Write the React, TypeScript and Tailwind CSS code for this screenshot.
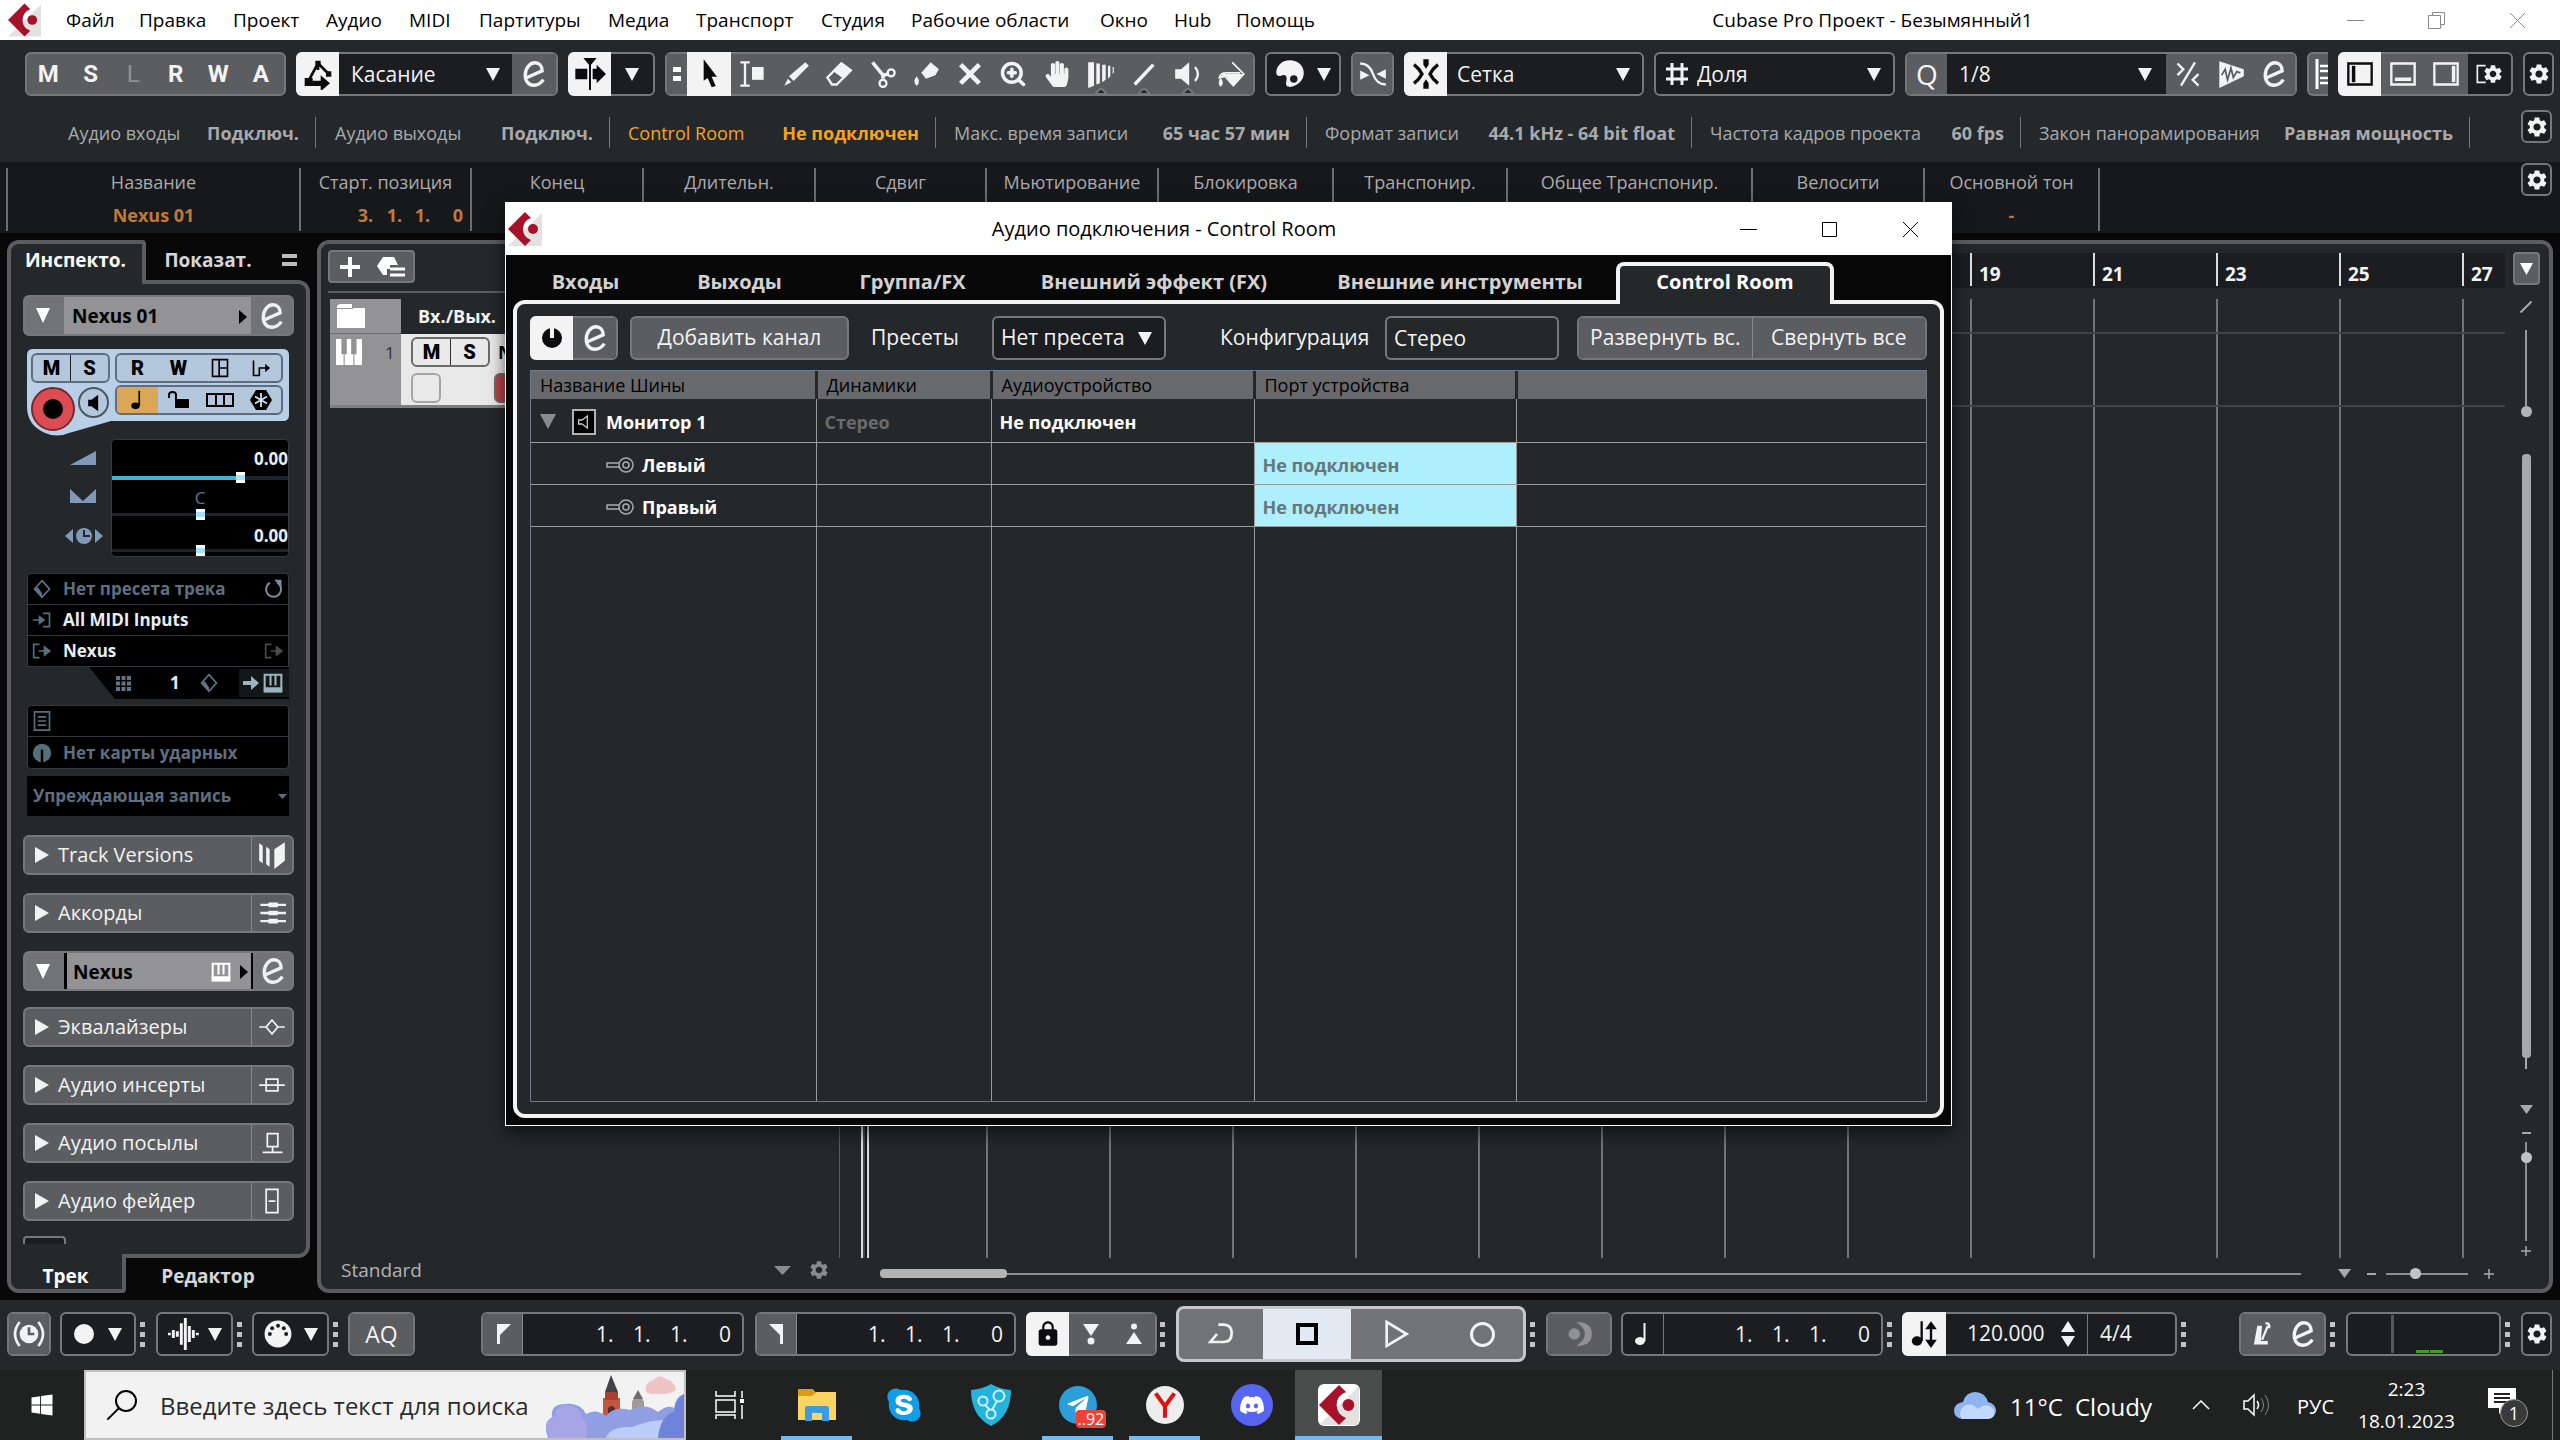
import type { ReactNode } from 'react';
import { MdLock, MdSettings } from 'react-icons/md';
import { FaDiscord, FaHandPaper, FaSkype, FaTelegramPlane, FaWindows } from 'react-icons/fa';
import { ZoomIn } from 'lucide-react';

const BTN = 'bg-[#5c5d61]';
const EDGE = 'border-2 border-[#77787b] rounded-md';
const FRAME = `${EDGE} overflow-hidden`;

function Svg({ box = '0 0 24 24', className = 'w-7 h-7', children }: { box?: string; className?: string; children: ReactNode }) {
  return (
    <svg viewBox={box} className={`shrink-0 ${className}`} fill="none" stroke="currentColor" strokeWidth="2">
      {children}
    </svg>
  );
}

const Down = ({ className = 'w-[14px] h-[13px]' }: { className?: string }) => (
  <svg viewBox="0 0 14 13" preserveAspectRatio="none" className={`shrink-0 ${className}`}><path d="M0 0H14L7 13Z" fill="currentColor" /></svg>
);

const Right = ({ className = 'w-[14px] h-4' }: { className?: string }) => (
  <svg viewBox="0 0 14 16" preserveAspectRatio="none" className={`shrink-0 ${className}`}><path d="M0 0L14 8L0 16Z" fill="currentColor" /></svg>
);

const EditIcon = ({ className = 'w-[30px] h-[30px]' }: { className?: string }) => (
  <Svg className={className}>
    <path d="M6 15L18.5 9.5C18.5 5.5 16 3 12.8 3C8.5 3 5 7.5 5 13C5 18 8 21 11.8 21C15.2 21 17.8 19 19.5 16.5" strokeWidth="2.7" />
  </Svg>
);

const Logo = ({ className = 'w-[33px] h-[34px]' }: { className?: string }) => (
  <Svg box="0 0 34 34" className={className}>
    <path d="M34 1V34H0Z" fill="#e2e2e2" stroke="none" />
    <path d="M17 0L23 6Q15 9 15 17Q15 25 23 28L17 34L0 17Z" fill="#a51229" stroke="none" />
    <circle cx="25" cy="17" r="5" fill="#a51229" stroke="none" />
  </Svg>
);

const Piano = ({ className = 'w-7 h-7' }: { className?: string }) => (
  <Svg className={className}>
    <path d="M0 0H5V14H7V24H0ZM8 24V14H10V0H14V14H16V24ZM17 24V14H19V0H24V24Z" fill="currentColor" stroke="none" />
  </Svg>
);

const Keys = ({ className = 'w-5 h-5' }: { className?: string }) => (
  <Svg className={className}>
    <path d="M2 2H22V22H2ZM9 2V15M15 2V15" strokeWidth="2.5" /><path d="M2 18H22V22H2Z" fill="currentColor" />
  </Svg>
);

const Note = ({ className = 'w-6 h-6' }: { className?: string }) => (
  <Svg className={className}>
    <ellipse cx="9" cy="19" rx="5" ry="4" fill="currentColor" stroke="none" /><path d="M13.5 19V1" />
  </Svg>
);

const Diamond = ({ className = 'w-5 h-5' }: { className?: string }) => (
  <Svg className={className}>
    <path d="M12 2L21 12L12 22L3 12Z" /><path d="M3 12L12 22V17L7 10Z" fill="currentColor" stroke="none" />
  </Svg>
);

const ArrowOut = ({ className = 'w-5 h-5' }: { className?: string }) => (
  <Svg className={className}>
    <path d="M9 4H2V20H9M8 12H16" /><path d="M14 5L23 12L14 19Z" fill="currentColor" stroke="none" />
  </Svg>
);

const Dots = ({ className = 'ml-1 mr-[10px]' }: { className?: string }) => (
  <div className={`flex w-[6px] shrink-0 flex-col gap-[5px] ${className}`}>
    <i className="h-[5px] w-[5px] bg-[#c4c4c6]" />
    <i className="h-[5px] w-[5px] bg-[#c4c4c6]" />
    <i className="h-[5px] w-[5px] bg-[#c4c4c6]" />
  </div>
);

function Group({ className = '', children }: { className?: string; children: ReactNode }) {
  return <div className={`flex h-11 shrink-0 ${EDGE} bg-[#1b1d21] text-[#f3f3f3] ${className}`}>{children}</div>;
}

function Cell({ on, label, className = '', children }: { on?: boolean; label: string; className?: string; children: ReactNode }) {
  return (
    <button
      aria-label={label}
      className={`flex min-w-0 flex-1 items-center justify-center ${on ? '-my-[2px] bg-[#f3f3f3] text-[#0c0c0e] first:-ml-[2px] first:rounded-l-md' : `${BTN} first:rounded-l-sm last:rounded-r-sm`} ${className}`}
    >
      {children}
    </button>
  );
}

function Dropdown({ label, value, className = '' }: { label: string; value: string; className?: string }) {
  return (
    <div className={`flex flex-1 items-center ${className}`}>
      <select aria-label={label} className="h-full min-w-0 flex-1 appearance-none bg-transparent pt-[2px] text-[21px] outline-none">
        <option>{value}</option>
      </select>
      <Down />
    </div>
  );
}

const GearButton = ({ className = 'h-11' }: { className?: string }) => (
  <button aria-label="Настройка" className={`flex w-[31px] shrink-0 items-center justify-center ${FRAME} bg-[#1b1d21] text-[#f3f3f3] ${className}`}>
    <MdSettings className="h-6 w-6 shrink-0" />
  </button>
);

/* ---------- menu bar ---------- */

const menu = [
  { label: 'Файл', w: 'w-[73px]' },
  { label: 'Правка', w: 'w-[94px]' },
  { label: 'Проект', w: 'w-[93px]' },
  { label: 'Аудио', w: 'w-[83px]' },
  { label: 'MIDI', w: 'w-[70px]' },
  { label: 'Партитуры', w: 'w-[129px]' },
  { label: 'Медиа', w: 'w-[88px]' },
  { label: 'Транспорт', w: 'w-[125px]' },
  { label: 'Студия', w: 'w-[90px]' },
  { label: 'Рабочие области', w: 'w-[189px]' },
  { label: 'Окно', w: 'w-[74px]' },
  { label: 'Hub', w: 'w-[62px]' },
  { label: 'Помощь', w: 'w-[120px]' },
];

function WindowButtons({ restore, className = '' }: { restore?: boolean; className?: string }) {
  return (
    <div className={`flex items-center ${className}`}>
      <button aria-label="Свернуть" className="flex w-[81px] justify-center">
        <Svg box="0 0 17 17" className="h-[17px] w-[17px]"><path d="M0 8.5H17" strokeWidth="1" /></Svg>
      </button>
      <button aria-label="Развернуть" className="flex w-[81px] justify-center">
        <Svg box="0 0 17 17" className="h-[17px] w-[17px]">
          {restore ? <path d="M0.5 3.5H12.5V16.5H0.5ZM4.5 3V0.5H16.5V12.5H13" strokeWidth="1" /> : <path d="M1.5 1.5H15.5V15.5H1.5Z" strokeWidth="1" />}
        </Svg>
      </button>
      <button aria-label="Закрыть" className="flex w-[81px] justify-center">
        <Svg box="0 0 17 17" className="h-[17px] w-[17px]"><path d="M1 1L16 16M16 1L1 16" strokeWidth="1" /></Svg>
      </button>
    </div>
  );
}

function MenuBar() {
  return (
    <header className="flex h-10 shrink-0 items-center bg-white text-[19px] text-black">
      <Logo className="mx-2 h-[34px] w-[33px]" />
      <nav className="ml-[17px] flex">
        {menu.map((m) => (
          <button key={m.label} className={`shrink-0 whitespace-nowrap text-left ${m.w}`}>{m.label}</button>
        ))}
      </nav>
      <h1 className="flex-1 pl-[74px] text-center whitespace-nowrap">Cubase Pro Проект - Безымянный1</h1>
      <WindowButtons restore className="text-[#8a8a8a]" />
      <span className="w-[2px]" />
    </header>
  );
}

/* ---------- toolbar ---------- */

const tools: { label: string; icon: ReactNode; notch?: boolean }[] = [
  { label: 'Диапазон', icon: <Svg><path d="M2 2H10M6 2V22M2 22H10" /><path d="M12 6H22V17H12Z" fill="currentColor" stroke="none" /></Svg> },
  { label: 'Карандаш', icon: <Svg><path d="M20 2L23 5L10 18L6 14ZM5 16L8 19L2 22Z" fill="currentColor" stroke="none" /></Svg> },
  { label: 'Ластик', icon: <Svg><path d="M2 15L14 3L22 9L10 21H6Z" /><path d="M14 3L22 9L16 15L8 9Z" fill="currentColor" /></Svg> },
  { label: 'Ножницы', icon: <Svg><path d="M3 2L12 13M12 13L12 16M12 13L17 12" strokeWidth="3" /><circle cx="19" cy="11" r="3" /><circle cx="12" cy="20" r="3" /></Svg> },
  { label: 'Клей', icon: <Svg><path d="M8 11L16 2L23 8L20 13L12 16Z" fill="currentColor" stroke="none" /><path d="M4 14Q8 19 4 22Q0 19 4 14Z" fill="currentColor" stroke="none" /></Svg> },
  { label: 'Мьют', icon: <Svg><path d="M4 4L20 20M20 4L4 20" strokeWidth="4" /></Svg> },
  { label: 'Лупа', icon: <ZoomIn className="h-7 w-7" strokeWidth={3} /> },
  { label: 'Рука', icon: <FaHandPaper className="h-[26px] w-[26px]" /> },
  { label: 'Комп', notch: true, icon: <Svg><path d="M1 2H6V22L1 24ZM8 3H11V20L8 21ZM13 4H16V17L13 19ZM18 5H20V14L18 16ZM22 6H23V11L22 12Z" fill="currentColor" stroke="none" /></Svg> },
  { label: 'Линия', notch: true, icon: <Svg><path d="M4 21L20 4" strokeWidth="3" /></Svg> },
  { label: 'Звук', notch: true, icon: <Svg><path d="M1 8H6L13 2V22L6 16H1Z" fill="currentColor" stroke="none" /><path d="M18 6Q23 12 18 18" /></Svg> },
  { label: 'Цвет', icon: <Svg><path d="M13 2L23 12L14 22L7 14L2 15Q3 11 8 11H20" strokeWidth="1.500" /><path d="M5 12H23L14 22L8 14L3 15Z" fill="currentColor" stroke="none" /><path d="M3 15Q7 20 3 23Q0 20 3 15Z" fill="currentColor" stroke="none" /></Svg> },
];

function Toolbar() {
  return (
    <div className="flex h-[67px] shrink-0 items-start gap-[10px] pt-3 pr-2 pl-[25px]">
      <div className={`flex h-11 w-[261px] shrink-0 items-center ${FRAME} ${BTN} pr-[2px] font-["Roboto"] text-[24px] font-bold text-[#f3f3f3]`}>
        {['M', 'S', 'L', 'R', 'W', 'A'].map((c) => (
          <button key={c} className={`flex-1 ${c === 'L' ? 'font-normal text-[#929295]' : ''}`}>{c}</button>
        ))}
      </div>
      <Group className="w-[262px]">
        <Cell on label="Автоматизация" className="max-w-[43px]">
          <Svg className="h-8 w-8"><path d="M5 17L12 4L20 12M12 4V9" /><path d="M2 15H8V21H2ZM10 2H14V6H10ZM18 10H22V14H18ZM8 17H14V13L21 19L14 25V21H8Z" fill="currentColor" stroke="none" /></Svg>
        </Cell>
        <Dropdown label="Режим автоматизации" value="Касание" className="pr-3 pl-3" />
        <Cell label="Панель автоматизации" className="max-w-[44px]"><EditIcon /></Cell>
      </Group>
      <Group className="w-[87px]">
        <Cell on label="Автопрокрутка" className="min-w-[43px]">
          <Svg className="h-8 w-8"><path d="M1 8H10V16H1ZM14 8H17V5L24 12L17 19V16H14ZM7 0H17L12 6Z" fill="currentColor" stroke="none" /><path d="M12 3V24" strokeWidth="1.500" /></Svg>
        </Cell>
        <button aria-label="Опции прокрутки" className="flex flex-1 items-center justify-center"><Down /></button>
      </Group>
      <Group className="w-[590px]">
        <div className={`flex w-5 flex-col items-center justify-center gap-1 ${BTN}`}>
          <i className="h-[5px] w-[8px] bg-white" />
          <i className="h-[5px] w-[8px] bg-white" />
        </div>
        <Cell on label="Выбор"><Svg className="h-8 w-8"><path d="M8 1L18 14H14L17 21L14 22L11 15L8 17Z" fill="currentColor" stroke="none" /></Svg></Cell>
        {tools.map((t) => (
          <Cell key={t.label} label={t.label} className="relative">
            {t.icon}
            {t.notch && <Svg box="0 0 12 6" className="absolute bottom-0 h-[6px] w-3"><path d="M0 6L6 0L12 6Z" fill="#24282b" stroke="#77787b" /></Svg>}
          </Cell>
        ))}
      </Group>
      <Group className="w-[76px] items-center justify-center gap-3">
        <Svg className="h-[30px] w-[30px]"><path fillRule="evenodd" d="M12 1C5 1 1 6 1 11C1 14 4 14 6 13C9 12 10 15 9 18C8 22 11 23 14 22C20 20 23 16 23 11C23 5 18 1 12 1ZM15 13A3 3 0 1 1 15 19A3 3 0 0 1 15 13Z" fill="currentColor" stroke="none" /></Svg>
        <Down />
      </Group>
      <Group className="w-[43px]">
        <Cell label="Кроссфейд"><Svg><path d="M1 3Q9 3 12 12Q15 21 23 21" /><path d="M1 9L9 13L1 17ZM23 8L15 12L23 16Z" fill="currentColor" stroke="none" /></Svg></Cell>
      </Group>
      <Group className="w-[240px]">
        <Cell on label="Привязка" className="max-w-[43px]">
          <Svg className="h-8 w-8"><path d="M3 5Q7 8 9 12Q7 16 3 19M21 5Q17 8 15 12Q17 16 21 19" strokeWidth="2.500" /><path d="M10 1H14V5L12 8L10 5ZM10 23H14V19L12 16L10 19Z" fill="currentColor" stroke="none" /></Svg>
        </Cell>
        <Dropdown label="Тип привязки" value="Сетка" className="pr-3 pl-[10px]" />
      </Group>
      <Group className="w-[241px] items-center pl-[9px]">
        <Svg className="h-6 w-6"><path d="M7 1V23M17 1V23M1 7H23M1 17H23" strokeWidth="3" /></Svg>
        <Dropdown label="Тип сетки" value="Доля" className="h-full pr-3 pl-2" />
      </Group>
      <Group className="w-[392px]">
        <Cell label="Квантайз" className="max-w-10 text-[28px]"><span>Q</span></Cell>
        <Dropdown label="Значение квантайза" value="1/8" className="pr-[14px] pl-3" />
        <Cell label="Свинг" className="max-w-[43px]"><Svg><path d="M6 22L18 2M3 3L8 8L3 13M21 12L16 17L21 22" /></Svg></Cell>
        <Cell label="Аудио квантайз" className="max-w-[43px]"><Svg><path d="M2 1L23 8V14L2 24Z" fill="currentColor" stroke="none" /><path d="M4 13L7 8L9 17L12 7L14 15L17 10L20 11" stroke="#5c5d61" strokeWidth="1.500" /></Svg></Cell>
        <Cell label="Панель квантайза" className="max-w-[43px]"><EditIcon /></Cell>
      </Group>
      <div className={`flex h-11 w-[21px] shrink-0 items-center overflow-hidden rounded-l-md border-2 border-r-0 border-[#77787b] ${BTN} text-white`}>
        <Svg box="0 0 16 30" className="ml-[5px] h-[30px] w-4"><path d="M3 0V30" strokeWidth="3" /><path d="M6 7H16M6 12H16M6 19H16M6 24H16" strokeWidth="2.500" /></Svg>
      </div>
      <div className="ml-auto flex gap-[10px]">
        <Group className="w-[175px]">
          <Cell on label="Левая зона"><Svg><path d="M2 3H22V21H2Z" /><path d="M5 5H8V19H5Z" fill="currentColor" stroke="none" /></Svg></Cell>
          <Cell label="Нижняя зона"><Svg><path d="M2 3H22V21H2Z" /><path d="M5 15H19V18H5Z" fill="currentColor" stroke="none" /></Svg></Cell>
          <Cell label="Правая зона"><Svg><path d="M2 3H22V21H2Z" /><path d="M17 5H20V19H17Z" fill="currentColor" stroke="none" /></Svg></Cell>
          <button aria-label="Настройка макета" className="flex flex-1 items-center justify-center">
            <Svg className="-mr-3 h-6 w-5"><path d="M14 2H4V22H14" /></Svg><MdSettings className="h-[22px] w-[22px]" />
          </button>
        </Group>
        <GearButton />
      </div>
    </div>
  );
}

/* ---------- status and info lines ---------- */

const status = [
  { label: 'Аудио входы', value: 'Подключ.', w: 'w-[316px] pl-[68px]' },
  { label: 'Аудио выходы', value: 'Подключ.', w: 'w-[294px] pl-[19px]' },
  { label: 'Control Room', value: 'Не подключен', w: 'w-[326px] pl-[18px] text-[#f7a21c]' },
  { label: 'Макс. время записи', value: '65 час 57 мин', w: 'w-[371px] pl-[18px]' },
  { label: 'Формат записи', value: '44.1 kHz - 64 bit float', w: 'w-[385px] pl-[18px]' },
  { label: 'Частота кадров проекта', value: '60 fps', w: 'w-[329px] pl-[18px]' },
  { label: 'Закон панорамирования', value: 'Равная мощность', w: 'w-[449px] pl-[18px]' },
];

function StatusLine() {
  return (
    <div className="flex h-[55px] shrink-0 items-start pr-2 text-[18px] text-[#a9aaac]">
      <div className="flex pt-[10px]">
        {status.map((s) => (
          <div key={s.label} className={`flex h-[31px] shrink-0 items-center justify-between border-r border-[#77787b] pt-[2px] pr-4 whitespace-nowrap ${s.w}`}>
            <span>{s.label}</span>
            <b>{s.value}</b>
          </div>
        ))}
      </div>
      <div className="ml-auto pt-[3px]"><GearButton className="h-[33px]" /></div>
    </div>
  );
}

const info = [
  { label: 'Название', value: 'Nexus 01', w: 'w-[293px]' },
  { label: 'Старт. позиция', w: 'w-[171px]' },
  { label: 'Конец', w: 'w-[172px]' },
  { label: 'Длительн.', w: 'w-[172px]' },
  { label: 'Сдвиг', w: 'w-[171px]' },
  { label: 'Мьютирование', w: 'w-[172px]' },
  { label: 'Блокировка', w: 'w-[175px]' },
  { label: 'Транспонир.', w: 'w-[174px]' },
  { label: 'Общее Транспонир.', w: 'w-[245px]' },
  { label: 'Велосити', w: 'w-[172px]' },
  { label: 'Основной тон', value: '-', w: 'w-[175px]' },
];

function InfoLine() {
  return (
    <div className="flex h-[71px] shrink-0 items-start bg-[#17181b] pr-2 pl-[6px] text-[18px] text-[#a9aaac]">
      <div className="mt-[6px] flex h-[63px] border-l-2 border-[#6d6e71]">
        {info.map((c) => (
          <div key={c.label} className={`shrink-0 border-r-2 border-[#6d6e71] text-center whitespace-nowrap ${c.w}`}>
            <div className="h-7 leading-7">{c.label}</div>
            <div className="flex h-[35px] items-center justify-center pt-[3px] font-bold text-[#c07a35]">
              {c.value}
              {c.label === 'Старт. позиция' && (
                <span className="ml-auto flex pr-[7px] text-left"><span className="w-[29px]">3.</span><span className="w-7">1.</span><span className="w-[38px]">1.</span><span>0</span></span>
              )}
            </div>
          </div>
        ))}
      </div>
      <div className="ml-auto pt-[1px]"><GearButton className="h-[33px]" /></div>
    </div>
  );
}

/* ---------- inspector ---------- */

const RANGE = 'block w-full appearance-none bg-no-repeat [&::-webkit-slider-thumb]:h-[11px] [&::-webkit-slider-thumb]:w-[9px] [&::-webkit-slider-thumb]:appearance-none [&::-webkit-slider-thumb]:bg-[linear-gradient(#fff_30%,#a3e4f5_30%,#a3e4f5_70%,#fff_70%)]';

const sections = [
  { label: 'Эквалайзеры', icon: <Svg><path d="M1 12H7M17 12H23M12 6L17 12L12 18L7 12Z" strokeWidth="1.500" /></Svg> },
  { label: 'Аудио инсерты', icon: <Svg><path d="M1 12H23M7 7H17V17H7Z" strokeWidth="1.500" /></Svg> },
  { label: 'Аудио посылы', icon: <Svg><path d="M8 4H17V15H8ZM12.5 15V20M4 20H21" strokeWidth="1.500" /></Svg> },
  { label: 'Аудио фейдер', icon: <Svg><path d="M7 2H17V22H7ZM9 12H15" strokeWidth="1.500" /></Svg> },
];

function Section({ label, icon }: { label: string; icon: ReactNode }) {
  return (
    <div className={`flex h-10 shrink-0 items-stretch ${FRAME} ${BTN} text-[#f3f3f3]`}>
      <button className="flex flex-1 items-center gap-[9px] pl-[10px] text-left text-[20px] whitespace-nowrap"><Right />{label}</button>
      <button aria-label={`${label}: настройка`} className="flex w-[41px] items-center justify-center border-l border-[#8a8b8e]">{icon}</button>
    </div>
  );
}

function ChannelBlock() {
  return (
    <div className="relative ml-1 h-[88px] w-[262px]">
      <Svg box="0 0 262 88" className="absolute h-[88px] w-[262px]">
        <path d="M6 0H256Q262 0 262 6V66Q262 72 256 72H84L42 84Q30 89 18 84Q0 76 0 58V6Q0 0 6 0Z" fill="#b9cfe8" stroke="none" />
      </Svg>
      <div className="relative flex gap-[5px] pt-1 pl-1 text-black">
        <div className="w-[79px]">
          <div className="flex h-[30px] rounded-md border-2 border-[#5d6d7d] bg-[#b4c8dd] font-['Roboto'] text-[20px] leading-[27px] font-black">
            <button className="flex-1 border-r border-[#222]">M</button>
            <button className="flex-1">S</button>
          </div>
          <div className="mt-1 flex gap-[3px]">
            <button aria-label="Запись" className="flex h-[44px] w-[44px] shrink-0 items-center justify-center rounded-full border-2 border-[#732a30] bg-[#dd4c53]">
              <i className="h-5 w-5 rounded-full bg-black" />
            </button>
            <button aria-label="Мониторинг" className="flex h-[31px] w-[31px] shrink-0 items-center justify-center rounded-full border-2 border-[#4a5560] bg-[#b4c8dd]">
              <Svg className="h-5 w-5"><path d="M5 8H9L17 2V22L9 16H5Z" fill="currentColor" stroke="none" /></Svg>
            </button>
          </div>
        </div>
        <div className="flex w-[168px] flex-col gap-[2px]">
          <div className="flex h-[30px] items-center rounded-md border-2 border-[#5d6d7d] bg-[#b4c8dd] font-['Roboto'] text-[20px] font-black">
            <button className="flex-1">R</button>
            <button className="flex-1">W</button>
            <button aria-label="Вид" className="flex flex-1 justify-center"><Svg className="h-5 w-5"><path d="M3 2H21V22H3ZM11 2V22M11 12H21" /></Svg></button>
            <button aria-label="Выход" className="flex flex-1 justify-center"><Svg className="h-5 w-5"><path d="M3 3V21H10V12H18" /><path d="M17 7L23 12L17 17Z" fill="currentColor" stroke="none" /></Svg></button>
          </div>
          <div className="flex h-[30px] items-stretch overflow-hidden rounded-md border-2 border-[#5d6d7d] bg-[#b4c8dd]">
            <button aria-label="Музыкальный режим" className="flex flex-1 items-center justify-center bg-[#dba757]"><Note className="h-5 w-5" /></button>
            <button aria-label="Блокировка" className="flex flex-1 items-center justify-center"><Svg className="h-6 w-6"><path d="M2 10V7Q2 4 5.5 4Q9 4 9 7V12" /><path d="M8 11H22V20H8Z" fill="currentColor" stroke="none" /></Svg></button>
            <button aria-label="Дорожки" className="flex flex-1 items-center justify-center"><Svg box="0 0 28 14" className="h-[14px] w-7"><path d="M1 1H27V13H1ZM10 1V13M18 1V13" /></Svg></button>
            <button aria-label="Заморозить" className="flex flex-1 items-center justify-center">
              <Svg className="h-6 w-6"><path d="M7 2H17L23 12L17 22H7L1 12Z" fill="currentColor" stroke="none" /><path d="M12 5V19M6 8.5L18 15.5M18 8.5L6 15.5" stroke="#d4e2f0" strokeWidth="1.800" /></Svg>
            </button>
          </div>
        </div>
      </div>
    </div>
  );
}

function Faders() {
  return (
    <div className="mt-[2px] ml-1 flex h-[118px] w-[262px]">
      <div className="flex w-[84px] flex-col items-end gap-[24px] pt-[12px] pr-[8px] text-[#8099b8]">
        <Svg box="0 0 26 14" className="mr-[7px] h-[14px] w-[26px]"><path d="M0 14L26 0V14Z" fill="currentColor" stroke="none" /></Svg>
        <Svg box="0 0 26 14" className="mr-[7px] h-[14px] w-[26px]"><path d="M0 0L13 12L26 0V14H0Z" fill="currentColor" stroke="none" /></Svg>
        <Svg box="0 0 38 18" className="h-[18px] w-[38px]"><path d="M0 9L8 2V16ZM38 9L30 2V16Z" fill="currentColor" stroke="none" /><circle cx="19" cy="9" r="8" fill="currentColor" stroke="none" /><path d="M19 3V9H25" stroke="#24282b" /></Svg>
      </div>
      <div className="flex-1 rounded border border-[#33383d] bg-black text-[17px] font-bold text-[#e8edf5]">
        <div className="h-8 text-right leading-[38px]">0.00</div>
        <input aria-label="Громкость" type="range" min="0" max="100" defaultValue="74" className={`${RANGE} h-[11px] bg-[linear-gradient(90deg,#3fb4cc_73%,#1c252d_73%)] bg-[length:100%_4px] bg-center`} />
        <div className="h-[26px] text-center leading-[30px] font-normal text-[#64788c]">C</div>
        <input aria-label="Панорама" type="range" defaultValue="50" className={`${RANGE} h-[11px] bg-[linear-gradient(#1c252d,#1c252d)] bg-[length:100%_3px] bg-center`} />
        <div className="h-[25px] text-right leading-[31px]">0.00</div>
        <input aria-label="Задержка" type="range" defaultValue="50" className={`${RANGE} h-[11px] bg-[linear-gradient(#1c252d,#1c252d)] bg-[length:100%_3px] bg-center`} />
      </div>
    </div>
  );
}

function Routing() {
  const row = 'flex h-[31px] items-center border-b border-[#33383d] px-1 text-[17px] font-bold';
  return (
    <div className="mt-4 ml-1 w-[262px]">
      <div className="rounded-t border border-b-0 border-[#33383d] bg-black text-[#e8edf5]">
        <div className={`${row} text-[#5f6e80]`}><Diamond className="mr-[11px] h-5 w-5 text-[#5d7488]" /><span className="flex-1">Нет пресета трека</span>
          <Svg className="h-5 w-5 text-[#7c8ca0]"><path d="M16 4.5A9 9 0 1 1 7 4.5" strokeWidth="2.500" /><path d="M12 1H21V10Z" fill="currentColor" stroke="none" /></Svg>
        </div>
        <div className={row}>
          <Svg className="mr-[11px] h-5 w-5 text-[#557078]"><path d="M13 4H21V20H13M1 12H9" /><path d="M8 6L16 12L8 18Z" fill="currentColor" stroke="none" /></Svg>All MIDI Inputs
        </div>
        <div className={row}><ArrowOut className="mr-[11px] h-5 w-5 text-[#557078]" /><span className="flex-1">Nexus</span><ArrowOut className="h-5 w-5 text-[#4b4b4e]" /></div>
      </div>
      <div className="ml-[62px] flex h-[32px] items-center bg-black pl-[27px] text-[17px] font-bold text-[#e8edf5] [clip-path:polygon(0_0,100%_0,100%_100%,26px_100%)]">
        <Svg box="0 0 15 15" className="h-[15px] w-[15px] text-[#5d7488]"><path d="M2 0V15M7.5 0V15M13 0V15" strokeWidth="4" strokeDasharray="4 1.500" /></Svg>
        <span className="ml-[39px] w-[29px]">1</span>
        <Diamond className="h-5 w-5 text-[#5d7488]" />
        <div className="ml-auto flex h-7 items-center gap-1 bg-[#12181a] pr-[6px] pl-1 text-[#9db4bd]">
          <Svg box="0 0 16 14" className="h-[14px] w-4"><path d="M0 5H8V0L16 7L8 14V9H0Z" fill="currentColor" stroke="none" /></Svg>
          <Keys />
        </div>
      </div>
      <div className="mt-[6px] rounded border border-[#33383d] bg-black">
        <div className={row}><Svg className="h-[22px] w-5 text-[#557078]"><path d="M3 1H21V23H3ZM7 7H17M7 12H17M7 17H17" /></Svg></div>
        <div className="flex h-[31px] items-center px-1 text-[17px] font-bold text-[#5f6e80]">
          <Svg className="mr-[11px] h-5 w-5 text-[#557078]"><circle cx="12" cy="12" r="11" fill="currentColor" stroke="none" /><path d="M12 8V24" stroke="#000" strokeWidth="3" /></Svg>Нет карты ударных
        </div>
      </div>
      <button className="mt-[7px] flex h-10 w-full items-center justify-between bg-black pr-[2px] pl-[6px] text-[17px] font-bold text-[#5f6e80]">
        Упреждающая запись<Down className="h-[5px] w-[9px]" />
      </button>
    </div>
  );
}

function Inspector() {
  const edge = 'border-[#5b5c60] bg-[#24282b]';
  return (
    <aside className="flex w-[303px] shrink-0 flex-col text-[19px] font-bold">
      <div className="flex h-10 shrink-0 items-end">
        <button className={`relative z-10 -mb-1 h-11 w-[139px] rounded-t-xl rounded-tr-sm border-4 border-b-0 pr-[2px] pb-2 text-white ${edge}`}>Инспекто.</button>
        <button className="h-10 w-[123px] pl-[1px] text-[#d6d6d7]">Показат.</button>
        <button aria-label="Настройка инспектора" className="flex h-10 flex-1 flex-col items-center justify-center gap-1">
          <i className="h-[4px] w-[15px] bg-[#bcbcbe]" /><i className="h-[4px] w-[15px] bg-[#bcbcbe]" />
        </button>
      </div>
      <div className={`flex min-h-0 flex-1 flex-col rounded-r-xl border-4 pt-[11px] pr-3 pl-3 font-normal ${edge}`}>
        <div className={`flex h-[41px] shrink-0 ${FRAME} bg-[#727376]`}>
          <button aria-label="Свернуть трек" className="flex w-[39px] items-center justify-center pr-1 text-white"><Down className="h-[15px] w-[14px]" /></button>
          <button className="flex flex-1 items-center justify-between bg-[#939395] pt-[2px] pr-1 pl-[8px] text-[19px] font-bold text-black">Nexus 01<Right className="h-[14px] w-2" /></button>
          <button aria-label="Редактировать канал" className="flex w-[41px] items-center justify-center text-[#f0f0f0]"><EditIcon /></button>
        </div>
        <div className="mt-[13px]"><ChannelBlock /></div>
        <Faders />
        <Routing />
        <div className="mt-[19px] flex min-h-0 flex-1 flex-col overflow-hidden">
          <div className="flex flex-col gap-[18px]">
            <Section label="Track Versions" icon={<Svg><path d="M1 2L4 4V19L1 17ZM7 5L10 7V22L7 20ZM14 7L23 1V17L14 24Z" fill="currentColor" stroke="none" /></Svg>} />
            <Section label="Аккорды" icon={<Svg><path d="M2 5H24M2 12H24M2 19H24" /><path d="M10 4H16V6H10ZM10 11H16V13H10ZM10 18H16V20H10Z" fill="currentColor" /></Svg>} />
            <div className={`flex h-10 shrink-0 ${FRAME} bg-[#727376]`}>
              <button aria-label="Свернуть инструмент" className="flex w-[42px] items-center justify-center border-r-[3px] border-black pr-1 text-white"><Down className="h-[15px] w-[14px]" /></button>
              <button className="flex flex-1 items-center bg-[#939395] pt-[2px] pr-[3px] pl-[6px] text-[19px] font-bold text-black">
                <span className="flex-1 text-left">Nexus</span><Keys className="mr-[9px] h-5 w-5 text-white" /><Right className="h-[14px] w-2" />
              </button>
              <button aria-label="Редактировать инструмент" className="flex w-[41px] items-center justify-center border-l-2 border-black text-[#f0f0f0]"><EditIcon /></button>
            </div>
          </div>
          <div className="mt-4 flex flex-col gap-[18px]">
            {sections.map((s) => <Section key={s.label} {...s} />)}
          </div>
          <div className="mt-[15px] h-[9px] w-[43px] shrink-0 rounded-t border-2 border-b-0 border-[#77787b] bg-[#1b1d21]" />
        </div>
        <div className="h-[10px] shrink-0" />
      </div>
      <div className="flex h-[35px] shrink-0 items-start">
        <button className={`relative z-10 -mt-1 h-[39px] w-[119px] rounded-b-xl rounded-br-sm border-4 border-t-0 pt-2 pr-[2px] text-white ${edge}`}>Трек</button>
        <button className="h-[35px] w-[164px] pt-[2px] text-[#d6d6d7]">Редактор</button>
      </div>
    </aside>
  );
}

/* ---------- track list and arrange area ---------- */

function TrackList() {
  return (
    <div className="flex w-[518px] shrink-0 flex-col pt-[6px] pl-[7px]">
      <div className={`flex h-[33px] w-[87px] items-center justify-around rounded-sm border-2 border-[#77787b] ${BTN} text-white`}>
        <button aria-label="Добавить трек"><Svg className="h-6 w-6"><path d="M12 2V22M2 12H22" strokeWidth="4" /></Svg></button>
        <button aria-label="Пресет трека"><Svg box="0 0 28 20" className="h-5 w-7"><path d="M6 0H17L21 8H13V12H10V18H6L0 9Z" fill="currentColor" stroke="none" /><path d="M13 12H28M13 18H28" strokeWidth="3" /></Svg></button>
      </div>
      <div className="mt-2 h-[2px] bg-[#5b5c60]" />
      <div className="mt-[6px] ml-[2px] flex h-[35px]">
        <div className="flex w-[71px] items-center border-b border-[#6b6c6f] bg-[#939395] pl-[7px] text-white">
          <Svg box="0 0 28 24" className="h-6 w-7"><path d="M2 0H15V4H28V24H0V2Z" fill="currentColor" stroke="none" /><path d="M0 4.5H16" stroke="#939395" strokeWidth="1" /></Svg>
        </div>
        <div className="flex items-center pl-[17px] text-[18px] font-bold text-[#f3f3f3]">Вх./Вых.</div>
      </div>
      <div className="ml-[2px] flex h-[74px] border-b-[3px] border-[#7d7e81]">
        <div className="flex w-[71px] bg-[#939395] pt-[5px] pl-[5px] text-white">
          <Piano className="h-[26px] w-7" />
          <span className="ml-[22px] text-[17px] leading-7 text-[#333]">1</span>
        </div>
        <div className="flex-1 bg-[#e9e9ea] pt-[3px] pl-[10px] text-black">
          <div className="flex h-[30px] items-center">
            <div className="flex h-[30px] w-[79px] rounded-md border-2 border-[#6a6b6d] font-['Roboto'] text-[20px] leading-[26px] font-black">
              <button className="flex-1 border-r border-[#333]">M</button><button className="flex-1">S</button>
            </div>
            <span className="ml-2 text-[18px] font-bold">Nexus 01</span>
          </div>
          <div className="mt-[6px] flex gap-[53px]">
            <input aria-label="Выбрать трек" type="checkbox" className="h-[30px] w-[30px] appearance-none rounded-md border-2 border-[#a5a5a7]" />
            <button aria-label="Запись на трек" className="h-[30px] w-[30px] rounded-md border-2 border-[#6a6b6d] bg-[#b5424b]" />
          </div>
        </div>
      </div>
      <div className="mt-auto mb-[4px] flex h-[30px] items-center pr-[9px] pl-[13px] text-[19px] text-[#b3b4b6]">
        <span className="flex-1">Standard</span>
        <Down className="mr-[17px] h-[9px] w-[17px] text-[#8a8b8d]" />
        <button aria-label="Настройка списка" className="text-[#8a8b8d]"><MdSettings className="h-[22px] w-[22px]" /></button>
      </div>
    </div>
  );
}

const KNOB = 'appearance-none bg-no-repeat bg-center bg-[linear-gradient(#8f8f91,#8f8f91)] [&::-webkit-slider-thumb]:appearance-none [&::-webkit-slider-thumb]:h-[11px] [&::-webkit-slider-thumb]:w-[11px] [&::-webkit-slider-thumb]:rounded-full [&::-webkit-slider-thumb]:bg-[#c4c4c6]';

const Minus = ({ className = '' }: { className?: string }) => <i className={`h-[2px] w-[9px] shrink-0 bg-[#a9aaac] ${className}`} />;

const Plus = ({ className = '' }: { className?: string }) => (
  <Svg box="0 0 10 10" className={`h-[10px] w-[10px] ${className}`}><path d="M5 0V10M0 5H10" strokeWidth="1.500" /></Svg>
);

// the floating window covers the ruler up to this bar
const FIRST_LABEL = 19;

function Arrange() {
  const bars = Array.from({ length: 14 }, (_, i) => 1 + i * 2);
  return (
    <div className="flex min-w-0 flex-1 flex-col pt-[9px]">
      <div className="flex h-[35px] shrink-0 overflow-hidden bg-[#1b1d21] pl-6">
        {bars.map((b) => (
          <div key={b} className="h-[33px] w-[123px] shrink-0 border-l-2 border-[#dcdcdd] pl-[7px] text-[19px] leading-[42px] font-bold text-[#f3f3f3]">{b >= FIRST_LABEL && b}</div>
        ))}
      </div>
      <div className="relative mt-[11px] flex min-h-0 flex-1 overflow-hidden border-l border-[#5b5c60] pl-[23px]">
        <div className="absolute inset-x-0 top-[33px] h-[75px] border-y-2 border-[#404447]" />
        <div className="absolute inset-y-0 left-[21px] w-[8px] border-x-2 border-[#dcdcdd] bg-black/40" />
        {bars.map((b) => (
          <div key={b} className="w-[123px] shrink-0 border-l-2 border-[#727476]" />
        ))}
      </div>
      <div className="flex h-[31px] shrink-0 items-center pl-[41px] text-[#a9aaac]">
        <div className="flex h-[11px] min-w-0 flex-1 items-center">
          <i className="h-[9px] w-[127px] rounded bg-[#b3b3b4]" />
          <i className="h-[2px] flex-1 bg-[#8f8f91]" />
        </div>
        <Down className="ml-[37px] h-[9px] w-[13px]" />
        <Minus className="mr-[10px] ml-4" />
        <input aria-label="Масштаб по горизонтали" type="range" defaultValue="34" className={`${KNOB} h-4 w-[82px] bg-[length:100%_2px]`} />
        <Plus className="mr-[11px] ml-4" />
      </div>
    </div>
  );
}

function RightRail() {
  return (
    <div className="flex w-[44px] shrink-0 flex-col items-center pt-2 pr-[2px] text-[#a9aaac]">
      <button aria-label="Формат линейки" className={`flex h-[33px] w-[27px] items-center justify-center rounded-sm border-2 border-[#77787b] ${BTN} text-white`}><Down className="h-3 w-[13px]" /></button>
      <Svg className="mt-4 h-3 w-3"><path d="M1 23L23 1" strokeWidth="4" /></Svg>
      <div className="mt-[17px] h-[76px] w-[2px] bg-[#9a9a9c]" />
      <i className="h-[11px] w-[11px] rounded-full bg-[#b3b3b4]" />
      <div className="mt-[37px] w-[9px] flex-1 rounded bg-[#a9a9aa]" />
      <i className="h-[11px] w-[2px] bg-[#a9a9aa]" />
      <Down className="mt-9 h-[9px] w-[13px]" />
      <Minus className="mt-[18px]" />
      <input aria-label="Масштаб по вертикали" type="range" defaultValue="11" className={`${KNOB} mt-2 h-[99px] w-4 bg-[length:2px_100%] [writing-mode:vertical-lr]`} />
      <Plus className="mt-[5px] mb-[33px]" />
    </div>
  );
}

/* ---------- audio connections window ---------- */

const tabs = [
  { label: 'Входы', w: 'w-[145px]' },
  { label: 'Выходы', w: 'w-[163px]' },
  { label: 'Группа/FX', w: 'w-[183px]' },
  { label: 'Внешний эффект (FX)', w: 'w-[300px]' },
  { label: 'Внешние инструменты', w: 'w-[312px]' },
];

const KeyIcon = () => (
  <Svg box="0 0 30 18" className="h-[18px] w-[30px] text-[#a9aaac]">
    <circle cx="21" cy="9" r="7" strokeWidth="1.500" /><circle cx="21" cy="9" r="3" strokeWidth="1.500" /><path d="M14 7H2V11H14" strokeWidth="1.500" />
  </Svg>
);

function Connections() {
  const td = 'border-r border-b border-[#9a9b9d] px-2 pt-[3px]';
  return (
    <section className="absolute top-[202px] right-[608px] bottom-[314px] left-[505px] z-20 flex flex-col border border-white bg-[#080808] shadow-[0_6px_16px_rgba(0,0,0,0.6)]">
      <div className="flex h-[52px] shrink-0 items-center bg-white text-[20px] text-black">
        <Logo className="ml-[2px] h-[36px] w-[34px]" />
        <h2 className="flex-1 pl-[78px] text-center">Аудио подключения - Control Room</h2>
        <WindowButtons />
      </div>
      <div className="flex h-[45px] shrink-0 items-end pl-[7px] text-[20px] font-bold">
        {tabs.map((t) => (
          <button key={t.label} className={`h-[37px] shrink-0 whitespace-nowrap text-[#d2d2d3] ${t.w}`}>{t.label}</button>
        ))}
        <button className="relative z-10 mr-[117px] -mb-1 ml-auto h-[42px] w-[219px] rounded-t-lg border-4 border-b-0 border-[#f3f3f3] bg-[#24282b] pb-[6px] text-white">Control Room</button>
      </div>
      <div className="mx-[7px] mb-[7px] flex min-h-0 flex-1 flex-col rounded-xl border-4 border-[#f3f3f3] bg-[#24282b] px-[13px] pt-3 pb-3 text-[21px] text-[#f3f3f3]">
        <div className="flex h-11 shrink-0 items-center">
          <Group className="w-[88px]">
            <Cell on label="Вкл"><Svg className="h-6 w-6"><circle cx="12" cy="12" r="10" fill="currentColor" stroke="none" /><path d="M12 1V12" strokeWidth="4" stroke="#f3f3f3" /></Svg></Cell>
            <Cell label="Редактировать"><EditIcon /></Cell>
          </Group>
          <button className={`ml-3 h-11 w-[219px] shrink-0 ${FRAME} ${BTN}`}>Добавить канал</button>
          <label htmlFor="preset" className="ml-[22px] w-[121px]">Пресеты</label>
          <Group className="w-[174px] items-center pr-3 pl-[7px]">
            <select id="preset" className="h-full min-w-0 flex-1 appearance-none bg-transparent outline-none"><option>Нет пресета</option></select>
            <Down />
          </Group>
          <label htmlFor="config" className="ml-[54px] w-[165px]">Конфигурация</label>
          <input id="config" defaultValue="Стерео" className={`h-11 w-[174px] ${FRAME} bg-transparent px-[7px] outline-none`} />
          <Group className="ml-auto w-[350px]">
            <Cell label="Развернуть все">Развернуть вс.</Cell>
            <Cell label="Свернуть все" className="border-l border-[#8a8b8e]">Свернуть все</Cell>
          </Group>
        </div>
        <div className="mt-[10px] flex min-h-0 flex-1 flex-col border border-[#6b7b8c]">
          <table className="h-full w-full table-fixed border-collapse text-[18px] font-bold">
            <colgroup>
              <col className="w-[285px]" /><col className="w-[175px]" /><col className="w-[263px]" /><col className="w-[262px]" /><col />
            </colgroup>
            <thead>
              <tr className="h-[28px] bg-[#68696c] text-left text-black">
                {['Название Шины', 'Динамики', 'Аудиоустройство', 'Порт устройства'].map((h) => (
                  <th key={h} className="border-r-[3px] border-[#24282b] px-[9px] py-0 font-normal leading-7">{h}</th>
                ))}
                <td />
              </tr>
            </thead>
            <tbody className="leading-6">
              <tr className="h-[43px]">
                <td className={td}>
                  <div className="flex items-center text-white">
                    <Down className="mr-4 ml-[1px] h-[15px] w-4 text-[#8a8b8d]" />
                    <span className="mr-[10px] flex h-[26px] w-[24px] items-center justify-center border-2 border-[#b3b3b4] bg-black text-[#c4c4c6]"><Svg className="h-4 w-4"><path d="M4 9H9L17 3V21L9 15H4Z" /></Svg></span>
                    Монитор 1
                  </div>
                </td>
                <td className={`${td} text-[#6a6b6e]`}>Стерео</td>
                <td className={`${td} text-white`}>Не подключен</td>
                <td className={td} />
                <td className="border-b border-[#9a9b9d]" />
              </tr>
              {['Левый', 'Правый'].map((ch) => (
                <tr key={ch} className="h-[42px]">
                  <td className={td}><div className="flex items-center gap-[7px] pl-[66px] text-white"><KeyIcon />{ch}</div></td>
                  <td className={td} />
                  <td className={td} />
                  <td className={`${td} bg-[#aeeffc] text-[#66787d]`}>Не подключен</td>
                  <td className="border-b border-[#9a9b9d]" />
                </tr>
              ))}
              <tr>
                <td className="border-r border-[#9a9b9d]" /><td className="border-r border-[#9a9b9d]" /><td className="border-r border-[#9a9b9d]" /><td className="border-r border-[#9a9b9d]" /><td />
              </tr>
            </tbody>
          </table>
        </div>
      </div>
    </section>
  );
}

/* ---------- transport ---------- */

const Position = () => (
  <div className="flex flex-1 items-center justify-end pt-[2px] pr-[11px] text-[21px]">
    <span className="w-[37px]">1.</span><span className="w-[37px]">1.</span><span className="w-[49px]">1.</span><span>0</span>
  </div>
);

function Transport() {
  return (
    <footer className="flex h-[70px] shrink-0 items-center bg-[#24282b] pr-2 pb-[2px] pl-[7px] text-[#f3f3f3]">
      <Group className="w-[44px]"><Cell label="Компенсация"><Svg className="h-8 w-8"><circle cx="12" cy="12" r="7" fill="currentColor" stroke="none" /><path d="M12 7V12H16" stroke="#5c5d61" /><path d="M5 3Q-2 12 5 21M19 3Q26 12 19 21" /></Svg></Cell></Group>
      <Group className="ml-[9px] w-[76px] items-center justify-center gap-[14px]"><i className="h-5 w-5 rounded-full bg-[#f3f3f3]" /><Down /></Group>
      <Dots />
      <Group className="w-[77px] items-center justify-center gap-2"><Svg className="h-8 w-8"><path d="M1 11V13M4 9V15M7 10V14M10 4V20M13 0V24M16 6V18M19 9V15M22 11V13" strokeWidth="2.200" /></Svg><Down /></Group>
      <Dots className="mr-[9px] ml-1" />
      <Group className="w-[77px] items-center justify-center gap-3">
        <Svg><circle cx="12" cy="12" r="11.5" fill="currentColor" stroke="none" /><g fill="#1b1d21" stroke="none"><circle cx="5" cy="12" r="1.7" /><circle cx="7" cy="7" r="1.7" /><circle cx="12" cy="5" r="1.7" /><circle cx="17" cy="7" r="1.7" /><circle cx="19" cy="12" r="1.7" /></g></Svg>
        <Down />
      </Group>
      <Dots className="mr-[9px] ml-1" />
      <Group className="w-[67px]"><Cell label="Автоквантайз"><span className="text-[23px]">AQ</span></Cell></Group>
      <Group className="ml-[66px] w-[263px]"><Cell label="Левый локатор" className="max-w-10 border-r border-[#8a8b8e]"><Svg className="h-6 w-6"><path d="M6 2H20L9 13V22H6Z" fill="currentColor" stroke="none" /></Svg></Cell><Position /></Group>
      <Group className="ml-[11px] w-[261px]"><Cell label="Правый локатор" className="max-w-10 border-r border-[#8a8b8e]"><Svg className="h-6 w-6"><path d="M18 2H4L15 13V22H18Z" fill="currentColor" stroke="none" /></Svg></Cell><Position /></Group>
      <Group className="ml-[10px] w-[131px]">
        <Cell on label="Фиксация локаторов"><MdLock className="h-[28px] w-[28px]" /></Cell>
        <Cell label="Панч-ин"><Svg className="h-6 w-6"><path d="M4 2H20L12 14Z" fill="currentColor" stroke="none" /><circle cx="12" cy="19" r="3.5" fill="currentColor" stroke="none" /></Svg></Cell>
        <Cell label="Панч-аут"><Svg className="h-6 w-6"><path d="M4 22H20L12 10Z" fill="currentColor" stroke="none" /><circle cx="12" cy="4.5" r="3" fill="currentColor" stroke="none" /></Svg></Cell>
      </Group>
      <Dots className="mr-[10px] ml-[3px]" />
      <div className="flex h-[56px] w-[350px] shrink-0 overflow-hidden rounded-lg border-[3px] border-[#c8c8ca] bg-[#727376]">
        <button aria-label="Цикл" className="flex w-[84px] items-center justify-center"><Svg className="h-8 w-8"><path d="M10 5H14Q20 5 20 11.5Q20 18 14 18H4L9 12" /></Svg></button>
        <button aria-label="Стоп" className="flex w-[88px] items-center justify-center bg-[#e3e9f3]"><i className="h-[22px] w-[22px] border-4 border-black" /></button>
        <button aria-label="Старт" className="flex w-[90px] items-center justify-center"><Svg className="h-8 w-8"><path d="M5 3L20 12L5 21Z" /></Svg></button>
        <button aria-label="Запись" className="flex flex-1 items-center justify-center"><i className="h-[25px] w-[25px] rounded-full border-[3px] border-[#f3f3f3]" /></button>
      </div>
      <Dots />
      <Group className="w-[66px]"><Cell label="Предпрослушивание" className="text-[#929295]"><Svg><circle cx="8" cy="12" r="5" fill="currentColor" stroke="none" /><path d="M13 3Q22 4 22 12Q22 20 13 21Q18 17 18 12Q18 7 13 3Z" fill="currentColor" /></Svg></Cell></Group>
      <Group className="ml-[9px] w-[262px]"><button aria-label="Формат времени" className="flex w-[41px] items-center justify-center border-r border-[#77787b]"><Note /></button><Position /></Group>
      <Dots className="mr-[9px] ml-1" />
      <Group className="w-[275px]">
        <Cell on label="Темп-трек" className="max-w-[44px]"><Svg className="h-7 w-7"><ellipse cx="6" cy="18" rx="4.5" ry="4" fill="currentColor" stroke="none" /><path d="M10 18V1M18 5V20" /><path d="M13 8L18 1L23 8ZM13 17L18 24L23 17Z" fill="currentColor" stroke="none" /></Svg></Cell>
        <div className="flex flex-1 items-center justify-between border-r border-[#77787b] pr-3 pl-[21px] text-[21px]">120.000
          <Svg box="0 0 14 26" className="h-[26px] w-[14px]"><path d="M0 11L7 0L14 11ZM0 15L7 26L14 15Z" fill="currentColor" stroke="none" /></Svg>
        </div>
        <div className="flex w-[87px] items-center pl-3 text-[21px]">4/4</div>
      </Group>
      <Dots />
      <div className="ml-auto flex items-center">
        <Group className="w-[87px]">
          <Cell label="Метроном"><Svg><path d="M8 5L12 5L11 18H17V21H5Z" fill="currentColor" stroke="none" /><path d="M12 17L17 5M15 3Q19 2 18 7" /></Svg></Cell>
          <Cell label="Настройка метронома"><EditIcon /></Cell>
        </Group>
        <Dots />
        <Group className="w-[155px] items-end pb-[1px]">
          <i className="ml-[43px] h-[38px] w-[3px] bg-[#56575a]" />
          <i className="ml-[22px] h-[3px] w-[13px] bg-[#4a9a1e]" />
          <i className="ml-[1px] h-[3px] w-[13px] bg-[#4a9a1e]" />
        </Group>
        <Dots />
        <GearButton />
      </div>
    </footer>
  );
}

/* ---------- taskbar ---------- */

function Task({ label, open, active, children }: { label: string; open?: boolean; active?: boolean; children: ReactNode }) {
  return (
    <button aria-label={label} className={`relative flex h-full w-[87px] shrink-0 items-center justify-center ${active ? 'bg-[#4b4c4c]' : ''}`}>
      {children}
      {(open || active) && <i className={`absolute bottom-0 h-[4px] bg-[#76b9ed] ${active ? 'w-full' : 'w-[71px]'}`} />}
    </button>
  );
}

function Taskbar() {
  return (
    <div className="flex h-[70px] shrink-0 items-center bg-[#202121] text-white">
      <button aria-label="Пуск" className="flex w-[84px] justify-center"><FaWindows className="h-6 w-6" /></button>
      <label className="flex h-full w-[602px] shrink-0 items-center border-2 border-[#c0c0c0] bg-[#f2f2f2] text-black">
        <Svg className="ml-5 h-8 w-8"><circle cx="15" cy="9" r="7.5" strokeWidth="1.500" /><path d="M9.5 14.5L1 23" strokeWidth="1.500" /></Svg>
        <input type="text" aria-label="Поиск" placeholder="Введите здесь текст для поиска" className="ml-[22px] min-w-0 flex-1 bg-transparent pt-[2px] text-[24px] outline-none placeholder:text-[#2b2b2b]" />
        <Svg box="0 0 138 66" className="h-[66px] w-[138px]">
          <g stroke="none">
            <path d="M99 17Q101 9 108 8Q113 1 120 7Q128 8 130 18Q124 23 110 22Q100 23 99 17Z" fill="#eec3c6" />
            <path d="M86 30L88 26H96L98 30V42H86Z" fill="#a29a96" /><path d="M87 27L92 18L97 27Z" fill="#6e6c70" />
            <path d="M57 26H74V46H57Z" fill="#c4553f" /><path d="M59 20H72V28H59Z" fill="#a8412f" /><path d="M59 20L65 3L72 20Z" fill="#43414a" /><path d="M62 44V36Q65 32 69 36V46Z" fill="#5a2c2a" />
            <path d="M2 66Q-3 52 6 46Q4 32 19 32Q34 30 40 42Q50 36 60 44Q68 34 84 38Q100 30 112 40Q122 32 128 36Q130 24 138 22V66Z" fill="#8f9fe2" />
            <path d="M0 60Q-2 46 10 44Q8 34 20 33Q34 34 36 46Q44 50 40 66H4Z" fill="#a6a6e6" />
            <path d="M60 66Q64 54 86 55Q108 46 130 48V66Z" fill="#bcccfb" />
            <path d="M112 66Q114 44 128 40Q130 26 138 22V66Z" fill="#6f84d8" />
          </g>
        </Svg>
      </label>
      <Task label="Представление задач"><Svg box="0 0 29 28" className="h-7 w-[29px]"><path d="M1 0V5H20V0M1 9H20V21H1ZM1 28V24H20V28M27 0V7M27 14V28" strokeWidth="1.500" /><path d="M25 8H29V12H25Z" fill="currentColor" stroke="none" /></Svg></Task>
      <Task label="Проводник" open>
        <Svg box="0 0 38 32" className="h-8 w-[38px]"><g stroke="none"><path d="M0 0H15L18 4V10H0Z" fill="#d99a16" /><path d="M0 7H14L18 3H38V31H0Z" fill="#fcd462" /><path d="M7 19Q7 17 9 17H29Q31 17 31 19V32H24V24H14V32H7Z" fill="#3f9be0" /></g></Svg>
      </Task>
      <Task label="Skype">
        <span className="relative flex h-[38px] w-[38px] items-center justify-center">
          <i className="absolute h-6 w-6 rounded-full bg-white" /><FaSkype className="relative h-[38px] w-[38px] text-[#0f9ee8]" />
        </span>
      </Task>
      <Task label="Radmin">
        <Svg box="0 0 40 42" className="h-[42px] w-10"><path d="M20 0Q28 5 40 6Q40 32 20 42Q0 32 0 6Q12 5 20 0Z" fill="#23b3dd" stroke="none" /><g stroke="#c9f3ff"><circle cx="12" cy="17" r="4.5" /><circle cx="28" cy="12" r="5.5" /><circle cx="20" cy="30" r="4.5" /><path d="M14 21L19 26M26 17L21 26" /></g></Svg>
      </Task>
      <Task label="Telegram" open>
        <span className="relative flex h-[38px] w-[38px] items-center justify-center rounded-full bg-[#2a9fd9]">
          <FaTelegramPlane className="h-6 w-6" />
          <span className="absolute top-6 left-[17px] rounded bg-[#ef4237] px-[2px] text-[16px] leading-[18px]">..92</span>
        </span>
      </Task>
      <Task label="Яндекс" open>
        <span className="flex h-[38px] w-[38px] items-center justify-center rounded-full bg-[#ededed]"><Svg className="h-7 w-7 text-[#dd1212]"><path d="M4 2L12 13L20 2M12 12V23" strokeWidth="3.500" /></Svg></span>
      </Task>
      <Task label="Discord"><span className="flex h-[42px] w-[42px] items-center justify-center rounded-full bg-[#5865f2]"><FaDiscord className="h-[26px] w-[26px]" /></span></Task>
      <Task label="Cubase" active><span className="flex h-[42px] w-[42px] items-center justify-center overflow-hidden rounded-md bg-white"><Logo className="h-[40px] w-[40px]" /></span></Task>
      <div className="ml-auto flex h-full items-center">
        <Svg box="0 0 42 27" className="h-[27px] w-[42px]"><path d="M8 27Q0 26 0 18Q1 11 9 10Q12 0 21 0Q31 0 34 10Q42 12 42 19Q41 26 34 27Z" fill="#8db4f0" stroke="none" /><path d="M8 27Q3 20 10 14Q18 10 24 17Q34 9 40 18Q42 26 34 27Z" fill="#c3d9fb" stroke="none" /></Svg>
        <span className="ml-[14px] w-[65px] pt-1 text-[24px]">11°C</span>
        <span className="w-[117px] pt-1 text-[24px]">Cloudy</span>
        <Svg box="0 0 18 10" className="h-[10px] w-[18px]"><path d="M1 9L9 1L17 9" strokeWidth="1.500" /></Svg>
        <Svg box="0 0 28 24" className="ml-[33px] h-[24px] w-7"><path d="M1 8H5L11 2V22L5 16H1ZM14 8Q17 12 14 16" strokeWidth="1.500" /><path d="M18 5Q23 12 18 19M22 2Q29 12 22 22" strokeWidth="1" stroke="#888" /></Svg>
        <span className="ml-[26px] w-[59px] pt-[3px] text-[20px]">РУС</span>
        <div className="w-[101px] text-center text-[19px] leading-8"><div>2:23</div><div>18.01.2023</div></div>
        <button aria-label="Уведомления" className="relative ml-[31px] h-[42px] w-[44px]">
          <Svg box="0 0 28 26" className="absolute top-1 left-0 h-[26px] w-7"><path d="M0 0H28V20H16L11 26V20H0Z" fill="currentColor" stroke="none" /><path d="M6 6H22M6 10H22M6 14H22" stroke="#202121" /></Svg>
          <span className="absolute top-[15px] left-3 h-[28px] w-[28px] rounded-full border border-[#999] bg-[#3a3a3a] text-[18px] leading-[26px]">1</span>
        </button>
        <i className="mr-[7px] ml-[20px] h-full w-px bg-[#777]" />
      </div>
    </div>
  );
}

export default function App() {
  return (
    <div className="relative flex h-screen flex-col overflow-hidden bg-[#24282b] font-['Open_Sans',sans-serif]">
      <MenuBar />
      <Toolbar />
      <StatusLine />
      <InfoLine />
      <main className="flex min-h-0 flex-1 gap-[7px] bg-[#080808] p-[7px]">
        <Inspector />
        <div className="flex min-w-0 flex-1 overflow-hidden rounded-xl border-4 border-[#5b5c60] bg-[#24282b]">
          <TrackList />
          <Arrange />
          <RightRail />
        </div>
      </main>
      <Transport />
      <Taskbar />
      <Connections />
    </div>
  );
}
